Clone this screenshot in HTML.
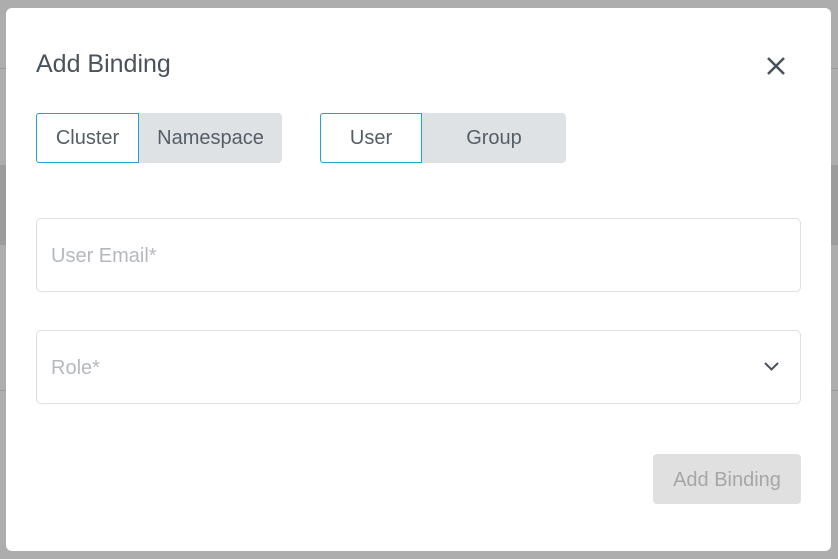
<!DOCTYPE html>
<html><head><style>
body{margin:0;width:838px;height:559px;background:#adadad;position:relative;overflow:hidden;font-family:"Liberation Sans",sans-serif;}
.band{position:absolute;left:0;right:0;}
.modal{position:absolute;left:6px;top:8px;width:825px;height:543px;background:#fff;border-radius:6px;}
.t{position:absolute;left:30px;top:42px;font-size:25px;color:#4a535c;}
.x{position:absolute;left:760px;top:48px;}
.seg{position:absolute;top:105px;height:50px;display:flex;}
.seg div{box-sizing:border-box;height:50px;line-height:50px;text-align:center;font-size:20px;color:#555d66;background:#dfe2e5;}
.seg .a{background:#fff;border:1px solid #1aa6d8;border-radius:3px 0 0 3px;line-height:48px;}
.seg .b{border-radius:0 4px 4px 0;}
.in{position:absolute;left:30px;width:765px;height:74px;box-sizing:border-box;border:1px solid #dcdfe3;border-radius:5px;}
.in span{position:absolute;left:14px;top:26px;font-size:20px;color:#b5b9be;}
.btn{position:absolute;left:647px;top:446px;width:148px;height:50px;background:#e0e0e0;border-radius:4px;color:#a6a6a6;font-size:20px;text-align:center;line-height:52px;}
</style></head><body>
<div class="band" style="top:68px;height:1px;background:#999"></div>
<div class="band" style="top:165px;height:80px;background:#9c9c9c"></div>
<div class="band" style="top:390px;height:1px;background:#999"></div>
<div class="modal">
<div class="t">Add Binding</div>
<svg class="x" width="20" height="20" viewBox="0 0 20 20"><path d="M2 2L18 18M18 2L2 18" stroke="#4a535c" stroke-width="2.6"/></svg>
<div class="seg" style="left:30px"><div class="a" style="width:103px">Cluster</div><div class="b" style="width:143px">Namespace</div></div>
<div class="seg" style="left:314px"><div class="a" style="width:102px">User</div><div class="b" style="width:144px">Group</div></div>
<div class="in" style="top:210px"><span>User Email*</span></div>
<div class="in" style="top:322px"><span>Role*</span>
<svg style="position:absolute;left:726px;top:29px" width="17" height="12" viewBox="0 0 17 12"><path d="M2 3L8.5 9.5L15 3" fill="none" stroke="#4a535c" stroke-width="2"/></svg></div>
<div class="btn">Add Binding</div>
</div>
</body></html>
